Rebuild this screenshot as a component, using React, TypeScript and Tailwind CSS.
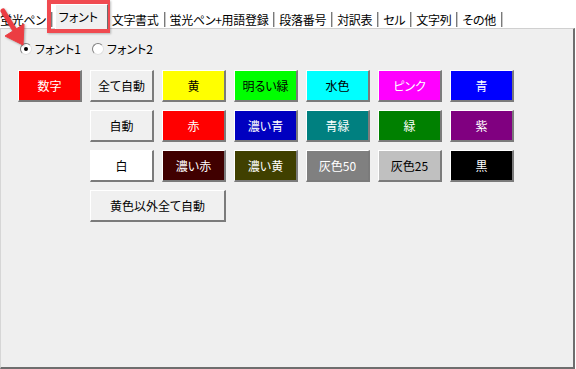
const tabs = [
  { label: "蛍光ペン" },
  { label: "フォント", active: true },
  { label: "文字書式" },
  { label: "蛍光ペン+用語登録" },
  { label: "段落番号" },
  { label: "対訳表" },
  { label: "セル" },
  { label: "文字列" },
  { label: "その他" },
];

type Swatch = { label: string; bg: string; fg: string; span?: boolean } | null;

const rows: Swatch[][] = [
  [
    { label: "数字", bg: "bg-[#ff0000]", fg: "text-white" },
    { label: "全て自動", bg: "bg-[#f0f0f0]", fg: "text-black" },
    { label: "黄", bg: "bg-[#ffff00]", fg: "text-black" },
    { label: "明るい緑", bg: "bg-[#00ff00]", fg: "text-black" },
    { label: "水色", bg: "bg-[#00ffff]", fg: "text-black" },
    { label: "ピンク", bg: "bg-[#ff00ff]", fg: "text-white" },
    { label: "青", bg: "bg-[#0000ff]", fg: "text-white" },
  ],
  [
    null,
    { label: "自動", bg: "bg-[#f0f0f0]", fg: "text-black" },
    { label: "赤", bg: "bg-[#ff0000]", fg: "text-white" },
    { label: "濃い青", bg: "bg-[#0000c0]", fg: "text-white" },
    { label: "青緑", bg: "bg-[#008080]", fg: "text-white" },
    { label: "緑", bg: "bg-[#008000]", fg: "text-white" },
    { label: "紫", bg: "bg-[#800080]", fg: "text-white" },
  ],
  [
    null,
    { label: "白", bg: "bg-white", fg: "text-black" },
    { label: "濃い赤", bg: "bg-[#400000]", fg: "text-white" },
    { label: "濃い黄", bg: "bg-[#404000]", fg: "text-white" },
    { label: "灰色50", bg: "bg-[#808080]", fg: "text-white" },
    { label: "灰色25", bg: "bg-[#c0c0c0]", fg: "text-black" },
    { label: "黒", bg: "bg-black", fg: "text-white" },
  ],
  [null, { label: "黄色以外全て自動", bg: "bg-[#f0f0f0]", fg: "text-black", span: true }],
];

function Radio({ checked, label }: { checked?: boolean; label: string }) {
  return (
    <label className="flex items-center gap-[3px]">
      <span className="w-[12px] h-[12px] rounded-full border border-[#808080] border-b-[#e0e0e0] border-r-[#e0e0e0] bg-white flex items-center justify-center">
        {checked && <span className="w-[4px] h-[4px] rounded-full bg-black" />}
      </span>
      <span className="text-[12px] leading-none">{label}</span>
    </label>
  );
}

export default function App() {
  return (
    <div className="relative w-[576px] h-[369px] bg-white overflow-hidden text-black font-['Noto_Sans_CJK_JP',sans-serif] [font-feature-settings:'palt']">
      {/* tab strip */}
      <div className="flex items-end h-[28px] -ml-[4px]">
        {tabs.map((t) =>
          t.active ? (
            <div
              key={t.label}
              className="relative z-10 w-[53px] h-[25px] -mb-[1px] ml-[2px] bg-[#f0f0f0] border-t border-l border-white border-r border-r-[#6b6b6b] flex items-center pl-[3px] text-[12px]"
            >
              {t.label}
            </div>
          ) : (
            <div key={t.label} className="h-[17px] flex items-center gap-[4px] pl-[4px] text-[12px] tracking-[-0.3px] whitespace-nowrap">
              <span>{t.label}</span>
              <span className="h-[15px] w-[3px] border-l border-white bg-[#7a7a7a] border-r border-r-[#c8c8c8]" />
            </div>
          )
        )}
      </div>

      {/* panel */}
      <div className="h-[341px] w-[575px] bg-[#efefef] border-t border-t-[#d0d0d0] border-l border-l-[#d6d6d6] border-r-2 border-r-[#6e6e6e] border-b-2 border-b-[#6e6e6e] pl-[17px] pt-[13px]">
        <div className="flex items-center pl-[2px] h-[14px]">
          <div className="w-[72px]">
            <Radio checked label="フォント1" />
          </div>
          <Radio label="フォント2" />
        </div>

        <div className="mt-[14px] grid grid-cols-[repeat(7,64px)] auto-rows-[32px] gap-[8px]">
          {rows.map((row, ri) =>
            row.map((s, ci) =>
              s ? (
                <div
                  key={`${ri}-${ci}`}
                  className={`${s.bg} ${s.fg} ${s.span ? "col-span-2" : ""} border-t border-l border-white border-b-2 border-r-2 border-b-[#7b7b7b] border-r-[#7b7b7b] flex items-center justify-center text-[12px]`}
                >
                  {s.label}
                </div>
              ) : (
                <div key={`${ri}-${ci}`} />
              )
            )
          )}
        </div>
      </div>

      {/* red highlight around active tab */}
      <div className="absolute left-[47px] top-0 w-[63px] h-[33px] border-[4px] border-[#f04a50] shadow-[1px_1px_2px_rgba(0,0,0,0.25)] pointer-events-none" />

      {/* red arrow */}
      <svg className="absolute left-0 top-0 pointer-events-none" width="40" height="52" viewBox="0 0 40 52">
        <g fill="#ec3d42" stroke="#ec3d42" style={{ filter: "drop-shadow(1px 1px 1px rgba(0,0,0,0.3))" }}>
          <line x1="3" y1="11" x2="14" y2="29" strokeWidth="5" strokeLinecap="round" />
          <polygon points="23,45 24,24 5,36" strokeWidth="1" strokeLinejoin="round" />
        </g>
      </svg>
    </div>
  );
}
